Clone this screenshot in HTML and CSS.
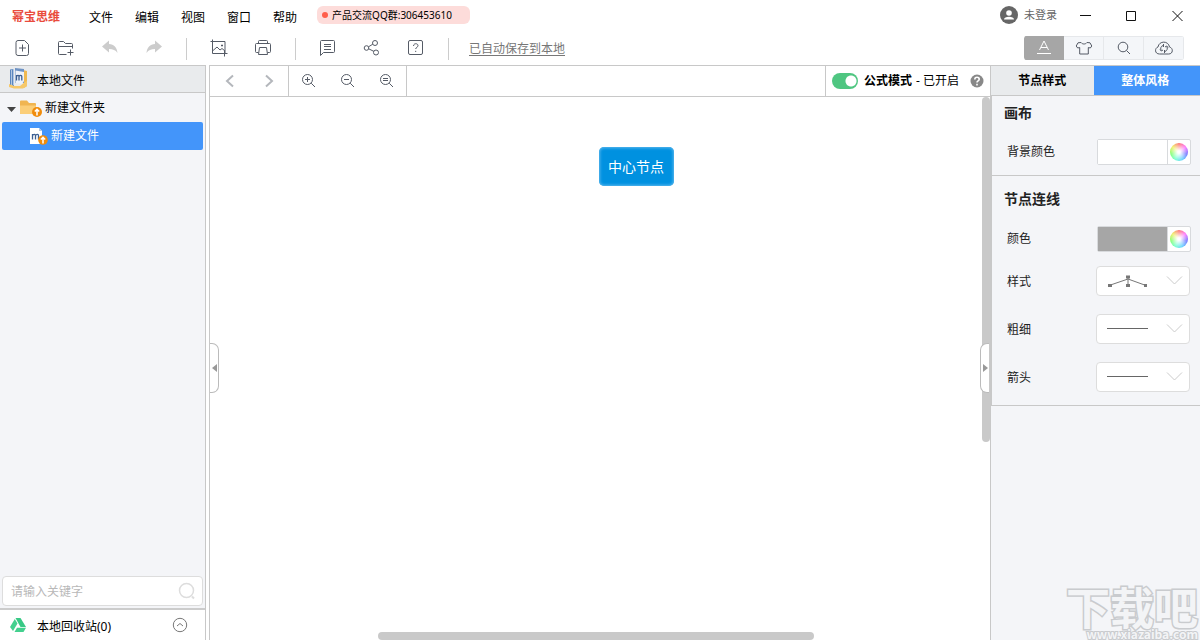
FILE: index.html
```html
<!DOCTYPE html>
<html lang="zh-CN">
<head>
<meta charset="utf-8">
<title>幂宝思维</title>
<link rel="stylesheet" href="styles.css">
</head>
<body>
<header class="titlebar">
  <span class="brand">幂宝思维</span>
  <nav class="menu">
    <button type="button">文件</button>
    <button type="button">编辑</button>
    <button type="button">视图</button>
    <button type="button">窗口</button>
    <button type="button">帮助</button>
  </nav>
  <span class="notice"><i class="notice-dot"></i>产品交流QQ群:306453610</span>
  <button type="button" class="account">
    <svg width="18" height="18" viewBox="0 0 18 18"><circle cx="9" cy="9" r="9" fill="#666"/><circle cx="9" cy="7" r="2.8" fill="#fff"/><path d="M4 13.6c0-2 2.3-2.8 5-2.8s5 .8 5 2.8z" fill="#fff"/></svg>
    <span>未登录</span>
  </button>
  <div class="window-buttons">
    <button type="button" aria-label="最小化"><svg width="11" height="11" viewBox="0 0 11 11"><path d="M0 4.500h11" stroke="#111"/></svg></button>
    <button type="button" aria-label="最大化"><svg width="11" height="11" viewBox="0 0 11 11"><path d="M.5.5h9v9h-9z" stroke="#111" fill="none"/></svg></button>
    <button type="button" aria-label="关闭"><svg width="11" height="11" viewBox="0 0 11 11"><path d="M.5 0l10 10M10.500 0l-10 10" stroke="#111" fill="none"/></svg></button>
  </div>
</header>

<div class="toolbar">
  <button type="button" class="tool" aria-label="新建文件"><svg width="18" height="18" viewBox="0 0 18 18"><path d="M11.5 1.5H5a2 2 0 0 0-2 2v11a2 2 0 0 0 2 2h8.500a2 2 0 0 0 2-2V5.500zM9.500 5.500v7M6 9h7"/></svg></button>
  <button type="button" class="tool" aria-label="新建文件夹"><svg width="18" height="18" viewBox="0 0 18 18"><path d="M9.500 15.500H2.500a1 1 0 0 1-1-1v-11a1 1 0 0 1 1-1h4l2 2h6a1 1 0 0 1 1 1v4M1.500 7.500h14M13.500 10.500v6M10.500 13.500h6"/></svg></button>
  <button type="button" class="tool tool-off" aria-label="撤销"><svg width="18" height="18" viewBox="0 0 18 18"><path d="M1 7.500L8 1.500v3.500c5 .2 8 3.500 8.500 9-2-3-4.500-4-8.500-4v3.500z"/></svg></button>
  <button type="button" class="tool tool-off" aria-label="重做"><svg width="18" height="18" viewBox="0 0 18 18"><path d="M17 7.500L10 1.500v3.500c-5 .2-8 3.500-8.500 9 2-3 4.500-4 8.500-4v3.500z"/></svg></button>
  <span class="divider"></span>
  <button type="button" class="tool" aria-label="图片"><svg width="18" height="18" viewBox="0 0 18 18"><path d="M.5 2.500h14.500v12.500M2.500.5v14h15M14.500 12v5.500M2.500 12l4.500-4 3 3 2-1.500 3 2.500M11 6.500h2M12 5.500v2"/></svg></button>
  <button type="button" class="tool" aria-label="打印"><svg width="18" height="18" viewBox="0 0 18 18"><path d="M4.500 4.500v-2a1 1 0 0 1 1-1h7a1 1 0 0 1 1 1v2M4.500 13.500h-2a1 1 0 0 1-1-1v-7a1 1 0 0 1 1-1h13a1 1 0 0 1 1 1v7a1 1 0 0 1-1 1h-2M5.500 8.500h7l1 7h-9z"/></svg></button>
  <span class="divider"></span>
  <button type="button" class="tool" aria-label="备注"><svg width="18" height="18" viewBox="0 0 18 18"><path d="M1.500 16.500v-14a1 1 0 0 1 1-1h12a1 1 0 0 1 1 1v10a1 1 0 0 1-1 1H4.500zM5 5.500h7M5 7.500h7M5 10.500h7"/></svg></button>
  <button type="button" class="tool" aria-label="分享"><svg width="18" height="18" viewBox="0 0 18 18"><circle cx="3.500" cy="9" r="2.300"/><circle cx="12" cy="4" r="2.500"/><circle cx="13" cy="13.500" r="2.500"/><path d="M5.500 7.800L9.800 5.200M5.700 9.800l5.200 2.600"/></svg></button>
  <button type="button" class="tool" aria-label="帮助"><svg width="18" height="18" viewBox="0 0 18 18"><rect x="1.500" y="1.500" width="14" height="14" rx="1.500"/><path d="M6.500 7c0-3 4.500-3 4.500-.3 0 1.600-2.300 1.600-2.300 3.300M8.700 11.800v1.200"/></svg></button>
  <span class="divider"></span>
  <a class="saved" href="#">已自动保存到本地</a>
  <div class="modes">
    <button type="button" class="mode mode-on" aria-label="样式"><svg width="18" height="16" viewBox="0 0 18 16"><path d="M4.500 10L9 1l4.500 9M6 7.500h6M2 13.500h14"/></svg></button>
    <button type="button" class="mode" aria-label="主题"><svg width="18" height="16" viewBox="0 0 18 16"><path d="M6 2.500L3 2.800L1.200 6l1.500 2 2-.5v6.500h8.600V7.500l2 .5 1.500-2L15 2.800l-3-.3c-1.500 2-4.500 2-6 0z"/></svg></button>
    <button type="button" class="mode" aria-label="搜索"><svg width="18" height="16" viewBox="0 0 18 16"><circle cx="8" cy="7" r="4.800"/><path d="M11.500 10.500l3.500 3.500"/></svg></button>
    <button type="button" class="mode" aria-label="同步"><svg width="18" height="16" viewBox="0 0 18 16"><path d="M4.500 14c-5 0-5-6-1.500-7C4 .5 13.500.5 14.500 7c4 1 3.700 7-.8 7zM8 5.500c-2 .7-3 3-1.800 5M10 11.500c2-.7 3-3 1.800-5M8.500 4v3M9.500 10v3M5 9.500l1.300 1.500L8 10M13 7.500L11.700 6 10 7"/></svg></button>
  </div>
</div>

<main class="workspace">
  <aside class="sidebar">
    <h2 class="sidebar-title">
      <svg width="20" height="22" viewBox="0 0 20 22"><path d="M14 2l4 1v15l-3 2z" fill="#f0b950"/><path d="M1 1.500L5 1v17l-4-1z" fill="#5b87bf"/><path d="M2.500 2v16M4.500 1v16" stroke="#d7e3f2" stroke-width=".7"/><path d="M6 0l9 1v14H6z" fill="#6f93c4"/><path d="M6.500 2.500L15 4v9l-2 3-6.500-1z" fill="#eef3fa"/><path d="M0 16l5 2h6l5-4 2-1v5l-4 2.500H5L0 19z" fill="#f6c869"/><path d="M7.500 12.500V7M7.500 8.500c1-1.500 2.500-1.500 2.500 0v4M10 8.500c1-1.500 2.800-1.500 2.800 0v4" fill="none" stroke="#3c5f92" stroke-width="1.300"/></svg>
      <span>本地文件</span>
    </h2>
    <ul class="tree">
      <li><button type="button" class="tree-row">
        <svg width="38" height="20" viewBox="0 0 38 20"><path d="M0 9h9l-4.500 5z" fill="#444"/><path d="M13 3.500a1 1 0 0 1 1-1h6l2 2.500h6a1 1 0 0 1 1 1v9a1 1 0 0 1-1 1H14a1 1 0 0 1-1-1z" fill="#f0b551"/><path d="M13 7.500h16v7.500a1 1 0 0 1-1 1H14a1 1 0 0 1-1-1z" fill="#fbce78"/><circle cx="30" cy="14" r="5" fill="#f08c0c"/><path d="M30 17.500v-5M27.800 13.500l2.200-2.200 2.200 2.200" stroke="#fff" stroke-width="1.500" fill="none"/></svg>
        新建文件夹</button></li>
      <li><button type="button" class="tree-row tree-child tree-selected">
        <svg width="19" height="20" viewBox="0 0 19 20"><path d="M0 2h9l3 3v13H0z" fill="#fff"/><path d="M9 2l3 3H9z" fill="#b5c7dd"/><path d="M2.500 13.500V8M2.500 9.500c1-1.700 3-1.500 3 0v4M5.500 9.500c1-1.700 3-1.500 3 0v4" stroke="#3c5f92" stroke-width="1.300" fill="none"/><circle cx="13" cy="14" r="4.800" fill="#f08c0c"/><path d="M13 17.500v-5M10.800 13.500l2.200-2.200 2.200 2.200" stroke="#fff" stroke-width="1.500" fill="none"/></svg>
        新建文件</button></li>
    </ul>
    <label class="search">
      <input type="search" placeholder="请输入关键字" aria-label="请输入关键字">
      <svg width="18" height="18" viewBox="0 0 18 18"><circle cx="8.500" cy="8.500" r="7" fill="none" stroke="#ddd" stroke-width="1.500"/><path d="M14 14.500l2 2" stroke="#ddd" stroke-width="2"/></svg>
    </label>
    <div class="recycle">
      <svg width="16" height="14" viewBox="0 0 16 14"><path d="M5.500 0h5L16 9h-5.500z" fill="#38c985"/><path d="M4.800 1L7.500 5.500 3 13 0 9z" fill="#43d08e"/><path d="M7 9.800h9L13.500 14H4.500z" fill="#43d08e"/></svg>
      <span>本地回收站(0)</span>
      <button type="button" aria-label="展开"><svg width="16" height="16" viewBox="0 0 16 16"><circle cx="8" cy="8" r="6.700" fill="none" stroke="#777"/><path d="M5 9l3-2.500L11 9" fill="none" stroke="#777"/></svg></button>
    </div>
  </aside>

  <section class="editor">
    <div class="editor-bar">
      <div class="bar-group bar-history">
        <button type="button" aria-label="后退"><svg width="10" height="14" viewBox="0 0 10 14"><path d="M8 1.500L2 7l6 5.500"/></svg></button>
        <button type="button" aria-label="前进"><svg width="10" height="14" viewBox="0 0 10 14"><path d="M2 1.500L8 7l-6 5.500"/></svg></button>
      </div>
      <div class="bar-group bar-zoom">
        <button type="button" aria-label="放大"><svg width="14" height="14" viewBox="0 0 14 14"><circle cx="5.500" cy="5.500" r="5"/><path d="M9.200 9.200l3.800 3.800M3 5.500h5M5.500 3v5"/></svg></button>
        <button type="button" aria-label="缩小"><svg width="14" height="14" viewBox="0 0 14 14"><circle cx="5.500" cy="5.500" r="5"/><path d="M9.200 9.200l3.800 3.800M3 5.500h5"/></svg></button>
        <button type="button" aria-label="原始大小"><svg width="14" height="14" viewBox="0 0 14 14"><circle cx="5.500" cy="5.500" r="5"/><path d="M9.200 9.200l3.800 3.800M3 4.500h5M3 6.500h5"/></svg></button>
      </div>
      <div class="formula">
        <label class="formula-label"><input type="checkbox" class="switch" checked><span><b>公式模式</b> - 已开启</span></label>
        <button type="button" aria-label="说明"><svg width="14" height="14" viewBox="0 0 14 14"><circle cx="7" cy="7" r="6.500" fill="#888"/><path d="M4.800 5.500c0-3 4.400-2.800 4.400-.2C9.200 7 7 6.800 7 8.500M7 9.800v1.600" stroke="#fff" stroke-width="1.600" fill="none"/></svg></button>
      </div>
    </div>
    <div class="canvas">
      <div class="node">中心节点</div>
      <div class="scroll-v"></div>
      <div class="scroll-h"></div>
      <button type="button" class="handle handle-left" aria-label="收起左栏"><svg width="5" height="8" viewBox="0 0 5 8"><path d="M5 0v8L0 4z" fill="#999"/></svg></button>
      <button type="button" class="handle handle-right" aria-label="收起右栏"><svg width="5" height="8" viewBox="0 0 5 8"><path d="M0 0v8l5-4z" fill="#999"/></svg></button>
    </div>
  </section>

  <aside class="panel">
    <div class="tabs">
      <button type="button" class="tab">节点样式</button>
      <button type="button" class="tab tab-on">整体风格</button>
    </div>
    <section class="group group-canvas">
      <h3>画布</h3>
      <div class="field field-color">
        <label for="bg">背景颜色</label>
        <div class="picker"><input type="color" id="bg" value="#ffffff"><button type="button" aria-label="选择背景颜色"><i class="wheel"></i></button></div>
      </div>
    </section>
    <section class="group group-line">
      <h3>节点连线</h3>
      <div class="field field-color">
        <label for="lc">颜色</label>
        <div class="picker"><input type="color" id="lc" value="#a6a6a6"><button type="button" aria-label="选择连线颜色"><i class="wheel"></i></button></div>
      </div>
      <div class="field">
        <label for="ls">样式</label>
        <div class="drop"><select id="ls"><option aria-label="直线"></option></select>
          <svg class="drop-art" width="78" height="16" viewBox="0 0 78 16"><path d="M2 12.500L21 6l18 6.500M21 4v8" stroke="#777" fill="none"/><path d="M1 11h4v3H1zM19 2.500h4v3h-4zM19 11h4v3h-4zM37 11h3v3h-3z" fill="#777"/><path d="M60 3.500l7.500 7.500L75 3.500" stroke="#ccc" fill="none"/></svg></div>
      </div>
      <div class="field">
        <label for="lw">粗细</label>
        <div class="drop"><select id="lw"><option aria-label="细"></option></select>
          <svg class="drop-art" width="78" height="16" viewBox="0 0 78 16"><path d="M0 7.500h41" stroke="#666"/><path d="M60 3.500l7.500 7.500L75 3.500" stroke="#ccc" fill="none"/></svg></div>
      </div>
      <div class="field">
        <label for="la">箭头</label>
        <div class="drop"><select id="la"><option aria-label="无"></option></select>
          <svg class="drop-art" width="78" height="16" viewBox="0 0 78 16"><path d="M0 7.500h41" stroke="#666"/><path d="M60 3.500l7.500 7.500L75 3.500" stroke="#ccc" fill="none"/></svg></div>
      </div>
    </section>
    <div class="watermark"><span class="watermark-name">下载吧</span><span class="watermark-url">www.xiazaiba.com</span></div>
  </aside>
</main>
</body>
</html>
```

FILE: styles.css
```css
* { box-sizing: border-box; }
body {
  margin: 0;
  height: 100vh;
  display: flex;
  flex-direction: column;
  overflow: hidden;
  background: #fff;
  color: #000;
  font: 12px/20px "Noto Sans", "Noto Sans CJK SC", sans-serif;
}
button {
  display: flex;
  align-items: center;
  justify-content: center;
  padding: 0;
  border: 0;
  background: none;
  color: inherit;
  font: inherit;
}
h2, h3, ul { margin: 0; padding: 0; font-size: 12px; }
ul { list-style: none; }
svg { flex: none; display: block; }

.titlebar { display: flex; align-items: center; height: 32px; padding-left: 12px; }
.brand { padding-top: 2px; color: #e94b3c; font-weight: bold; }
.menu { display: flex; gap: 22px; margin: 4px 20px 0 29px; }
.notice {
  display: flex;
  align-items: center;
  height: 18px;
  margin-bottom: 2px;
  padding: 0 18px 0 5px;
  border-radius: 6px;
  background: #fddcda;
  font-size: 10px;
}
.notice-dot { width: 6px; height: 6px; margin-right: 4px; border-radius: 50%; background: #ff5e4a; }
.account { gap: 6px; margin-left: auto; margin-right: 5px; padding-bottom: 2px; font-size: 11px; color: #666; }
.window-buttons { display: flex; }
.window-buttons button { width: 46px; height: 30px; }

.toolbar { display: flex; align-items: center; height: 33px; padding-right: 16px; }
.tool { width: 44px; height: 32px; padding-bottom: 2px; }
.tool svg, .mode svg { fill: none; stroke: #555b66; stroke-width: 1; }
.tool-off svg { fill: #ccc; stroke: none; }
.divider { width: 1px; height: 22px; margin: 0 10px; background: #ccc; }
.saved { margin-left: 10px; color: #777; text-underline-offset: 2px; }
.modes {
  display: flex;
  width: 160px;
  height: 24px;
  margin-bottom: 1px;
  margin-left: auto;
  border-radius: 3px;
  overflow: hidden;
}
.mode { flex: 1; border: 1px solid #e6e8eb; border-left-width: 0; background: #f4f6f9; }
.mode-on { background: #a6a6a6; border-color: #a6a6a6; }
.mode-on svg { stroke: #fff; }

.workspace { flex: 1; display: flex; min-height: 0; }
.sidebar {
  display: flex;
  flex-direction: column;
  width: 206px;
  margin-right: 3px;
  border-top: 1px solid #c8c8c8;
  border-right: 1px solid #c8c8c8;
  background: #f4f5f8;
}
.sidebar-title {
  display: flex;
  align-items: center;
  gap: 8px;
  height: 27px;
  padding-left: 9px;
  border-bottom: 1px solid #c8c8c8;
  background: #e9ebed;
  font-weight: normal;
}
.sidebar-title span { padding-top: 3px; }
.tree { flex: 1; padding: 1px 2px 0; }
.tree-row { justify-content: flex-start; width: 100%; height: 28px; padding-left: 5px; border-radius: 2px; }
.tree-child { gap: 2px; padding-left: 28px; }
.tree-selected { background: #4395fa; color: #fff; }
.search {
  display: flex;
  align-items: center;
  height: 30px;
  margin: 0 2px 2px;
  padding: 0 6px 0 8px;
  border: 1px solid #ddd;
  border-radius: 4px;
  background: #fff;
}
.search input { flex: 1; min-width: 0; padding: 2px 0 0; border: 0; outline: 0; background: none; font: inherit; }
.search input::placeholder { color: #b8b8b8; }
.recycle {
  display: flex;
  align-items: center;
  height: 32px;
  padding: 0 17px 0 10px;
  border-top: 2px solid #ccc;
  background: #fff;
}
.recycle span { margin-left: 11px; padding-top: 3px; }
.recycle button { margin-left: auto; }

.editor { flex: 1; display: flex; flex-direction: column; min-width: 0; border: 1px solid #c8c8c8; border-bottom: 0; }
.editor-bar { display: flex; height: 31px; border-bottom: 1px solid #c8c8c8; }
.bar-group { display: flex; align-items: center; border-right: 1px solid #c8c8c8; }
.bar-group button { width: 39px; height: 30px; }
.bar-group svg { fill: none; stroke: #555b66; stroke-width: 1; }
.bar-history { width: 79px; }
.bar-history svg { stroke: #b4b7bc; stroke-width: 2; }
.bar-zoom { width: 118px; }
.formula {
  display: flex;
  align-items: center;
  gap: 11px;
  margin-left: auto;
  padding: 0 6px;
  border-left: 1px solid #c8c8c8;
}
.formula-label { display: flex; align-items: center; gap: 6px; }
.formula b { margin-right: 1px; }
.switch {
  appearance: none;
  width: 26px;
  height: 16px;
  margin: 0;
  border-radius: 8px;
  background: radial-gradient(circle at 19px 8px, #fff 5px, #4fc681 6px);
}
.canvas { position: relative; flex: 1; overflow: hidden; }
.node {
  position: absolute;
  top: 50px;
  left: 389px;
  padding: 10px 10px 9px 9px;
  border-radius: 5px;
  background: #0091e0;
  box-shadow: inset 0 0 3px 1px #5db8ee;
  color: #fff;
  font-size: 14px;
}
.scroll-v { position: absolute; top: 0; right: 0; width: 8px; height: 345px; border-radius: 4px; background: #c9c9c9; }
.scroll-h { position: absolute; bottom: 0; left: 168px; width: 436px; height: 8px; border-radius: 4px; background: #c9c9c9; }
.handle { position: absolute; top: 246px; width: 9px; height: 50px; border: 1px solid #bbb; background: #fff; }
.handle-left { left: 0; border-left: 0; border-radius: 0 7px 7px 0; }
.handle-right { right: 1px; border-right: 0; border-radius: 7px 0 0 7px; }

.panel {
  display: flex;
  flex-direction: column;
  width: 209px;
  border-top: 1px solid #c8c8c8;
  background: #f4f5f8;
}
.tabs { display: flex; height: 30px; border-bottom: 1px solid #c8c8c8; }
.tab { flex: 104; padding-top: 1px; background: #e9ebed; font-weight: bold; }
.tab-on { flex: 105; padding-right: 3px; background: #4395fa; color: #fff; }
.group { padding: 0 10px 0 15px; border-bottom: 1px solid #c8c8c8; border-left: 1px solid #c8c8c8; color: #222; }
.group h3 { margin-left: -3px; font-size: 14px; }
.group-canvas { padding-top: 7px; padding-bottom: 9px; }
.group-line { padding-top: 13px; padding-bottom: 13px; }
.field { display: flex; align-items: center; justify-content: space-between; height: 30px; margin-top: 18px; }
.field label { padding-top: 2px; }
.field-color { height: 28px; margin-top: 15px; margin-right: -1px; }
.field-color label { padding-top: 0; }
.group-line .field-color { margin-top: 16px; }
.field-color + .field { margin-top: 13px; }
.picker { display: flex; width: 94px; height: 26px; border: 1px solid #d8dadd; border-radius: 2px; background: #fff; }
.picker input { appearance: none; flex: 1; min-width: 0; height: 24px; margin: 0; padding: 0; border: 0; border-right: 1px solid #d8dadd; background: none; }
.picker input::-webkit-color-swatch-wrapper { padding: 0; }
.picker input::-webkit-color-swatch { border: 0; border-radius: 0; }
.picker button { width: 22px; }
.wheel {
  width: 18px;
  height: 18px;
  border-radius: 50%;
  background:
    radial-gradient(circle, #fff 10%, rgba(255, 255, 255, 0) 75%),
    conic-gradient(#f66, #f6f, #66f, #5cf, #6fc, #7f6, #ee5, #f66);
}
.drop { position: relative; width: 94px; height: 30px; }
.drop select { appearance: none; width: 100%; height: 100%; border: 1px solid #ddd; border-radius: 4px; background: #fff; }
.drop-art { position: absolute; top: 7px; left: 11px; pointer-events: none; }
.watermark {
  display: flex;
  flex-direction: column;
  align-items: flex-end;
  margin-top: auto;
  padding-right: 2px;
  color: #f3f4f6;
  font-family: "Noto Sans CJK SC", sans-serif;
  font-weight: bold;
  white-space: nowrap;
  paint-order: stroke fill;
  -webkit-text-stroke: 3px #c9cbce;
}
.watermark-name { font-size: 44px; line-height: 44px; }
.watermark-url { font-size: 12px; line-height: 12px; -webkit-text-stroke-width: 2px; }
```
